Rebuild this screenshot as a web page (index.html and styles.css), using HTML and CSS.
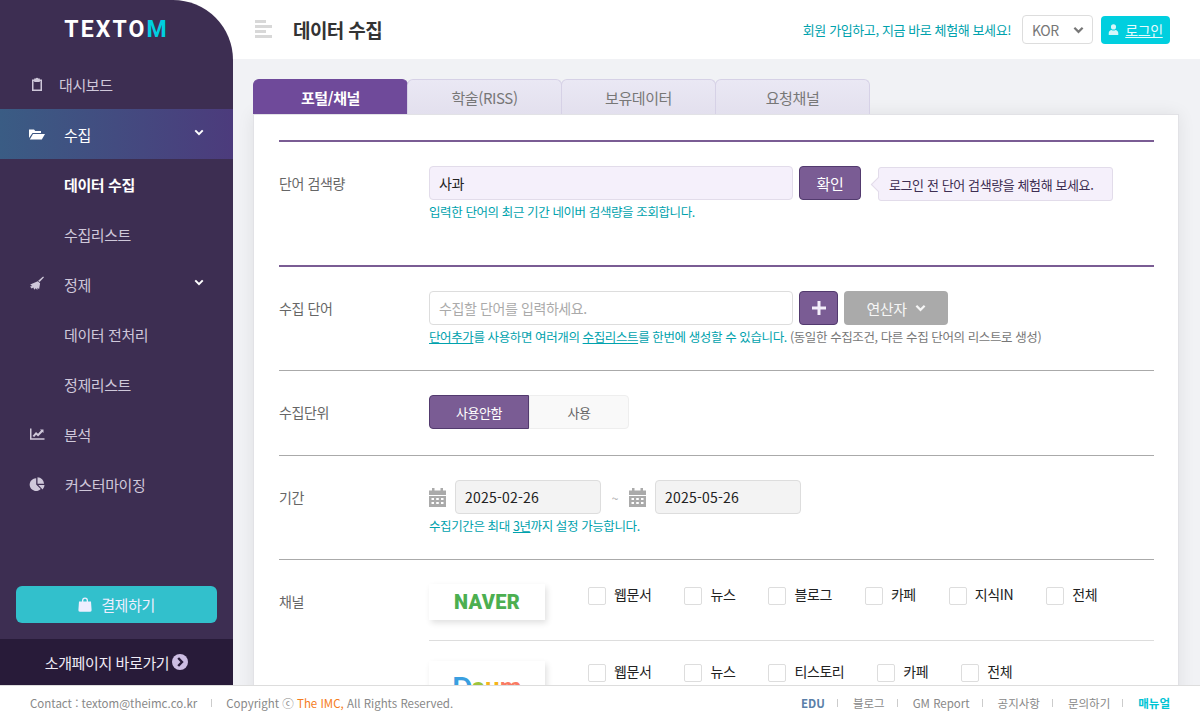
FILE: index.html
```html
<!DOCTYPE html>
<html lang="ko">
<head>
  <meta charset="UTF-8">
  <title>TEXTOM</title>
  <link rel="stylesheet" href="styles.css">
</head>
<body>
  <div class="shell">
    <aside class="sidebar">
      <div class="logo">TEXTO<span class="logo-m">M</span></div>
      <nav class="nav">
        <a class="nav-item">
          <svg class="nav-icon" viewBox="0 0 16 16"><path d="M3 3.5h2.2V2.6h1.5a1.4 1.4 0 0 1 2.6 0h1.5v.9H13v11.4H3zM4.5 5v8.4h7V5h-.7v1H5.200V5z" fill-rule="evenodd"/></svg>
          <span class="nav-text nav-text-a">대시보드</span>
        </a>
        <a class="nav-item active">
          <svg class="nav-icon" viewBox="0 0 16 16"><path d="M0 3.500h5l1.300 1.500h5.700v2H3.500L0 12zM4 8h12l-3.200 5.500H.8z"/></svg>
          <span class="nav-text">수집</span>
          <svg class="nav-caret" viewBox="0 0 12 8"><path d="M1.500 1.500 6 6l4.500-4.500" fill="none" stroke="currentColor" stroke-width="2.400"/></svg>
        </a>
        <a class="nav-sub current">데이터 수집</a>
        <a class="nav-sub">수집리스트</a>
        <a class="nav-item">
          <svg class="nav-icon" viewBox="0 0 16 16"><path d="M15 1.200 10.600 6l-1.400-1.200L14.100.5zM8.800 5.200l2.300 2-1 6-1.500-1.500-.3 2.300-1.600-1.700-1.500 1.500-.8-2.200-1.700.9L1 10.500l2.200-.4-2-1.600z"/></svg>
          <span class="nav-text">정제</span>
          <svg class="nav-caret" viewBox="0 0 12 8"><path d="M1.500 1.500 6 6l4.500-4.500" fill="none" stroke="currentColor" stroke-width="2.400"/></svg>
        </a>
        <a class="nav-sub">데이터 전처리</a>
        <a class="nav-sub">정제리스트</a>
        <a class="nav-item">
          <svg class="nav-icon" viewBox="0 0 16 16"><path d="M1 2.500h1.500v9.700H15.500v1.500H1zM3.500 10 7 6l2 1.800 3-3.300-1-1h3.500V7l-1-1-4.400 4.600-2-1.800-1.800 2.200z"/></svg>
          <span class="nav-text">분석</span>
        </a>
        <a class="nav-item">
          <svg class="nav-icon" viewBox="0 0 16 16"><path d="M7.200 2.200v6.300l4.500 4.500A6.400 6.400 0 1 1 7.200 2.200zM8.500 1.200a6.800 6.800 0 0 1 6.600 6.600H8.500zM9.300 9h6.200a6.400 6.400 0 0 1-1.900 4.400z"/></svg>
          <span class="nav-text nav-text-c">커스터마이징</span>
        </a>
      </nav>
      <a class="pay-btn">
        <svg class="pay-icon" viewBox="0 0 14 15"><path d="M4 4.500V3.500a3 3 0 0 1 6 0v1h3l.6 8.500a1.500 1.500 0 0 1-1.500 1.700H1.900A1.500 1.500 0 0 1 .4 13L1 4.500zm1.300 0h3.400v-1a1.700 1.700 0 0 0-3.400 0z" fill-rule="evenodd"/></svg>
        결제하기
      </a>
      <a class="intro-link">
        소개페이지 바로가기
        <svg class="intro-icon" viewBox="0 0 16 16"><circle cx="8" cy="8" r="8" fill="#cdbde3"/><path d="M6.200 4 10 8l-3.800 4" fill="none" stroke="#281b39" stroke-width="2.400"/></svg>
      </a>
    </aside>

    <main class="main">
      <header class="topbar">
        <div class="burger"><i class="b1"></i><i class="b2"></i><i class="b3"></i><i class="b4"></i></div>
        <h1 class="page-title">데이터 수집</h1>
        <span class="promo">회원 가입하고, 지금 바로 체험해 보세요!</span>
        <div class="lang">KOR
          <svg class="lang-caret" viewBox="0 0 12 8"><path d="M1.500 1.500 6 6l4.500-4.500" fill="none" stroke="currentColor" stroke-width="2.400"/></svg>
        </div>
        <a class="login">
          <svg class="login-icon" viewBox="0 0 12 12"><circle cx="6" cy="3.200" r="2.800"/><path d="M.8 12V9.800C.8 7.800 2.500 6.800 3.800 6.500c1.400.8 3 .8 4.400 0 1.300.3 3 1.300 3 3.300V12z"/></svg>
          <span>로그인</span>
        </a>
      </header>

      <div class="content">
        <div class="tabs">
          <a class="tab on">포털/채널</a>
          <a class="tab">학술(RISS)</a>
          <a class="tab">보유데이터</a>
          <a class="tab">요청채널</a>
        </div>
        <div class="panel">
          <section class="row row-major row-search">
            <label class="row-label">단어 검색량</label>
            <div class="field">
              <div class="line">
                <div class="input input-tint">사과</div>
                <a class="btn btn-purple btn-ok">확인</a>
                <div class="tip">로그인 전 단어 검색량을 체험해 보세요.</div>
              </div>
              <p class="hint">입력한 단어의 최근 기간 네이버 검색량을 조회합니다.</p>
            </div>
          </section>

          <section class="row row-major">
            <label class="row-label">수집 단어</label>
            <div class="field">
              <div class="line">
                <div class="input input-empty">수집할 단어를 입력하세요.</div>
                <a class="btn btn-purple btn-plus">
                  <svg viewBox="0 0 14 14" class="plus"><path d="M5.500 0h3v5.500H14v3H8.500V14h-3V8.500H0v-3h5.500z"/></svg>
                </a>
                <a class="btn btn-gray">연산자
                  <svg class="btn-caret" viewBox="0 0 12 8"><path d="M1.500 1.500 6 6l4.500-4.500" fill="none" stroke="currentColor" stroke-width="2.400"/></svg>
                </a>
              </div>
              <p class="hint"><u>단어추가</u>를 사용하면 여러개의 <u>수집리스트</u>를 한번에 생성할 수 있습니다. <span class="hint-muted">(동일한 수집조건, 다른 수집 단어의 리스트로 생성)</span></p>
            </div>
          </section>

          <section class="row">
            <label class="row-label">수집단위</label>
            <div class="field">
              <div class="toggle">
                <a class="toggle-opt on">사용안함</a>
                <a class="toggle-opt">사용</a>
              </div>
            </div>
          </section>

          <section class="row">
            <label class="row-label">기간</label>
            <div class="field">
              <div class="line">
                <svg class="cal" viewBox="0 0 17 19"><path d="M3 0h2.500v2.500h6V0H14v2.500h3V7H0V2.500h3zM0 8h17v11H0zm2.500 2v2h2.500v-2zm4.700 0v2h2.600v-2zm4.800 0v2h2.500v-2zM2.500 14v2h2.500v-2zm4.700 0v2h2.600v-2zm4.800 0v2h2.500v-2z" fill-rule="evenodd"/></svg>
                <div class="input input-date">2025-02-26</div>
                <span class="tilde">~</span>
                <svg class="cal" viewBox="0 0 17 19"><path d="M3 0h2.500v2.500h6V0H14v2.500h3V7H0V2.500h3zM0 8h17v11H0zm2.500 2v2h2.500v-2zm4.700 0v2h2.600v-2zm4.800 0v2h2.500v-2zM2.500 14v2h2.500v-2zm4.700 0v2h2.600v-2zm4.800 0v2h2.500v-2z" fill-rule="evenodd"/></svg>
                <div class="input input-date">2025-05-26</div>
              </div>
              <p class="hint">수집기간은 최대 <u>3년</u>까지 설정 가능합니다.</p>
            </div>
          </section>

          <section class="row row-channels">
            <label class="row-label">채널</label>
            <div class="field">
              <div class="channel">
                <div class="brand"><span class="naver">NAVER</span></div>
                <ul class="checks">
                  <li><i class="box"></i>웹문서</li>
                  <li><i class="box"></i>뉴스</li>
                  <li><i class="box"></i>블로그</li>
                  <li><i class="box"></i>카페</li>
                  <li><i class="box"></i>지식IN</li>
                  <li><i class="box"></i>전체</li>
                </ul>
              </div>
              <div class="channel">
                <div class="brand"><span class="daum"><b class="d1">D</b><b class="d2">a</b><b class="d3">u</b><b class="d4">m</b></span></div>
                <ul class="checks">
                  <li><i class="box"></i>웹문서</li>
                  <li><i class="box"></i>뉴스</li>
                  <li><i class="box"></i>티스토리</li>
                  <li><i class="box"></i>카페</li>
                  <li><i class="box"></i>전체</li>
                </ul>
              </div>
            </div>
          </section>
        </div>
      </div>
    </main>
  </div>

  <footer class="footer">
    <span>Contact : textom@theimc.co.kr</span>
    <i class="sep sep-left"></i>
    <span>Copyright ⓒ <em class="imc">The IMC,</em> All Rights Reserved.</span>
    <div class="foot-links">
      <a class="edu">EDU</a><i class="sep"></i>
      <a>블로그</a><i class="sep"></i>
      <a>GM Report</a><i class="sep"></i>
      <a>공지사항</a><i class="sep"></i>
      <a>문의하기</a><i class="sep"></i>
      <a class="manual">매뉴얼</a>
    </div>
  </footer>
</body>
</html>
```

FILE: styles.css
```css
* {
    box-sizing: border-box;
}
html, body {
    margin: 0;
    height: 720px;
    overflow: hidden;
}
body {
    background: #fff;
    color: #555;
    font-family: "Noto Sans CJK KR", "Noto Sans", sans-serif;
    font-size: 14px;
    letter-spacing: -0.4px;
}
p, ul, h1 {
    margin: 0;
    padding: 0;
}
i, em {
    font-style: normal;
}

/* layout */
.shell {
    display: flex;
    height: 685px;
    background: #fff;
}
.main {
    flex: 1;
    min-width: 0;
    display: flex;
    flex-direction: column;
}

/* sidebar */
.sidebar {
    width: 233px;
    flex: none;
    display: flex;
    flex-direction: column;
    background: #3d2e52;
    border-top-right-radius: 60px;
    color: #cfc8da;
}
.logo {
    height: 59px;
    padding-top: 15px;
    text-align: center;
    font-family: Roboto, sans-serif;
    font-weight: 700;
    font-size: 23px;
    line-height: 30px;
    letter-spacing: 2.1px;
    color: #fff;
}
.logo-m {
    color: #00cfe0;
}
.nav-item, .nav-sub {
    display: flex;
    align-items: center;
    height: 50px;
    font-size: 15px;
}
.nav-item {
    padding-left: 29px;
}
.nav-sub {
    padding-left: 64px;
}
.nav-icon {
    width: 16px;
    height: 16px;
    flex: none;
    fill: currentColor;
}
.nav-text {
    margin-left: 19px;
}
.nav-text-a {
    margin-left: 14px;
}
.nav-text-c {
    margin-left: 20px;
}
.nav-caret {
    width: 10px;
    height: 7px;
    margin-left: auto;
    margin-right: 29px;
    margin-top: -3px;
    color: #fff;
}
.nav-item.active {
    color: #fff;
    background: linear-gradient(90deg, #3a5c84, #4c3b7c);
}
.nav-sub.current {
    color: #fff;
    font-weight: 700;
}
.pay-btn {
    display: flex;
    align-items: center;
    justify-content: center;
    gap: 9px;
    height: 37px;
    margin: auto 16px 16px;
    background: #32c0cc;
    border-radius: 6px;
    color: #eef;
    font-size: 15px;
}
.pay-icon {
    width: 14px;
    height: 15px;
    fill: #eef;
}
.intro-link {
    display: flex;
    align-items: center;
    justify-content: center;
    gap: 3px;
    height: 46px;
    background: #281b39;
    color: #f0ecf6;
    font-size: 15px;
}
.intro-icon {
    width: 16px;
    height: 16px;
}

/* top bar */
.topbar {
    display: flex;
    align-items: center;
    height: 59px;
    flex: none;
    padding: 0 30px 0 22px;
    background: #fff;
}
.burger {
    width: 17px;
    margin-right: 21px;
}
.burger i {
    display: block;
    height: 3px;
    margin-bottom: 2px;
    background: #d8d8d8;
}
.b1 { width: 11px; }
.b2 { width: 17px; }
.b3 { width: 11px; }
.b4 { width: 17px; }
.page-title {
    font-size: 19px;
    font-weight: 700;
    color: #333;
    letter-spacing: -0.6px;
}
.promo {
    margin-left: auto;
    font-size: 13px;
    color: #00a2ad;
}
.lang {
    display: flex;
    align-items: center;
    justify-content: space-between;
    width: 71px;
    height: 29px;
    margin-left: 11px;
    padding: 0 8px 0 9px;
    border: 1px solid #ddd;
    border-radius: 4px;
    color: #777;
    font-size: 14px;
}
.lang-caret {
    width: 11px;
    height: 8px;
}
.login {
    display: flex;
    align-items: center;
    justify-content: center;
    gap: 6px;
    width: 69px;
    height: 28px;
    margin-left: 8px;
    background: #00cfdf;
    border-radius: 4px;
    color: #e6fbfd;
    font-size: 14px;
}
.login span {
    text-decoration: underline;
}
.login-icon {
    width: 11px;
    height: 11px;
    fill: #d5f6f9;
}

/* content */
.content {
    flex: 1;
    min-height: 0;
    overflow: hidden;
    padding: 20px 21px 0 20px;
    background: #f1f2f5;
}
.tabs {
    display: flex;
    height: 35px;
}
.tab {
    width: 155px;
    display: flex;
    align-items: center;
    justify-content: center;
    margin-right: -1px;
    background: linear-gradient(#eae8f4, #e3e0ee);
    border: 1px solid #d6d1e6;
    border-bottom: 0;
    border-radius: 6px 6px 0 0;
    color: #777;
    font-size: 15px;
}
.tab.on {
    background: #6f4a9a;
    border-color: #6f4a9a;
    color: #fff;
    font-weight: 700;
}
.panel {
    height: 700px;
    padding: 25px 24px 0 25px;
    background: #fff;
    border: 1px solid #e2e2e6;
    border-width: 1px 1px 0;
    box-shadow: 0 0 16px rgba(0, 0, 0, 0.08);
}

/* form rows */
.row {
    display: flex;
    padding: 24px 0 23px;
    border-top: 1px solid #aaa;
}
.row-major {
    border-top: 2px solid #7a5c94;
}
.row-search {
    padding-bottom: 43px;
}
.row-channels {
    padding-bottom: 0;
}
.row-label {
    width: 150px;
    flex: none;
    padding-top: 5px;
    font-size: 14px;
    line-height: 24px;
    color: #666;
}
.field {
    flex: 1;
    min-width: 0;
}
.line {
    display: flex;
    align-items: center;
    height: 34px;
}
.input {
    display: flex;
    align-items: center;
    width: 364px;
    height: 34px;
    padding: 0 9px;
    border: 1px solid #ddd;
    border-radius: 4px;
    font-size: 14px;
    color: #222;
}
.input-tint {
    background: #f5f0fb;
    border-color: #e2dcea;
}
.input-empty {
    color: #aaa;
}
.input-date {
    width: 146px;
    background: #f3f3f3;
    letter-spacing: 0.2px;
}
.btn {
    display: flex;
    align-items: center;
    justify-content: center;
    height: 34px;
    margin-left: 6px;
    border-radius: 4px;
    color: #fff;
    font-size: 15px;
}
.btn-purple {
    background: #7a5c94;
    border: 1px solid #523a6e;
}
.btn-ok {
    width: 62px;
}
.btn-plus {
    width: 39px;
}
.plus {
    width: 14px;
    height: 14px;
    fill: #f4eefa;
}
.btn-gray {
    width: 104px;
    gap: 8px;
    background: #aaa;
    color: #f6f6f6;
}
.btn-caret {
    width: 11px;
    height: 8px;
}
.tip {
    position: relative;
    width: 235px;
    height: 34px;
    margin: 2px 0 0 17px;
    padding-left: 10px;
    display: flex;
    align-items: center;
    background: #f5f0fb;
    border: 1px solid #e2dcea;
    border-radius: 3px;
    font-size: 13px;
    color: #3d2e52;
    white-space: nowrap;
}
.tip::before {
    content: "";
    position: absolute;
    left: -6px;
    top: 11px;
    width: 10px;
    height: 10px;
    background: #f5f0fb;
    border-left: 1px solid #e2dcea;
    border-bottom: 1px solid #e2dcea;
    transform: rotate(45deg);
}
.hint {
    margin-top: 2px;
    font-size: 12.500px;
    line-height: 20px;
    color: #00a2ad;
    white-space: nowrap;
}
.hint-muted {
    color: #777;
}
.toggle {
    display: flex;
    height: 34px;
    margin-bottom: 3px;
}
.toggle-opt {
    width: 100px;
    display: flex;
    align-items: center;
    justify-content: center;
    background: #f9f9f9;
    border: 1px solid #eee;
    border-radius: 0 4px 4px 0;
    font-size: 13px;
    color: #666;
}
.toggle-opt.on {
    background: #7a5c94;
    border-color: #523a6e;
    border-radius: 4px 0 0 4px;
    color: #fff;
}
.cal {
    width: 17px;
    height: 19px;
    flex: none;
    margin-right: 9px;
    fill: #aaa;
}
.tilde {
    width: 28px;
    text-align: center;
    color: #aaa;
    font-size: 12px;
}

/* channels */
.channel {
    display: flex;
    padding-bottom: 20px;
    margin-bottom: 20px;
    border-bottom: 1px solid #ddd;
}
.brand {
    width: 116px;
    height: 36px;
    flex: none;
    display: flex;
    align-items: center;
    justify-content: center;
    background: #fff;
    box-shadow: 2px 3px 6px rgba(0, 0, 0, 0.12);
}
.naver {
    font-family: Roboto, sans-serif;
    font-weight: 900;
    font-size: 20px;
    letter-spacing: 0.3px;
    color: #4caf50;
}
.daum {
    font-family: Lato, sans-serif;
    font-weight: 900;
    font-size: 26px;
    line-height: 36px;
    padding-top: 13px;
    letter-spacing: 0;
}
.d1 { color: #3a9fe0; }
.d2 { color: #9cc43c; }
.d3 { color: #f5b418; }
.d4 { color: #f97b63; }
.checks {
    display: flex;
    gap: 33px;
    margin-left: 43px;
    list-style: none;
    font-size: 14px;
    line-height: 20px;
    color: #222;
}
.checks li {
    display: flex;
    gap: 8px;
    align-items: flex-start;
    height: 22px;
    white-space: nowrap;
}
.box {
    width: 18px;
    height: 18px;
    margin-top: 3px;
    border: 1px solid #ddd;
    border-radius: 2px;
    background: #fff;
}

/* footer */
.footer {
    position: relative;
    z-index: 1;
    display: flex;
    align-items: center;
    height: 35px;
    padding: 0 30px;
    background: #fff;
    border-top: 1px solid #ddd;
    font-size: 11.500px;
    letter-spacing: 0;
    color: #888;
}
.sep {
    width: 1px;
    height: 8px;
    flex: none;
    margin: 0 12px;
    background: #ccc;
}
.sep-left {
    margin: 0 14px;
}
.imc {
    color: #f57c20;
}
.foot-links {
    display: flex;
    align-items: center;
    margin-left: auto;
}
.foot-links a {
    white-space: nowrap;
}
.foot-links .sep {
    margin: 0 15px 0 12px;
}
.edu {
    color: #5a7fa8;
    font-weight: 700;
}
.manual {
    color: #00c4d4;
    font-weight: 700;
}
```
